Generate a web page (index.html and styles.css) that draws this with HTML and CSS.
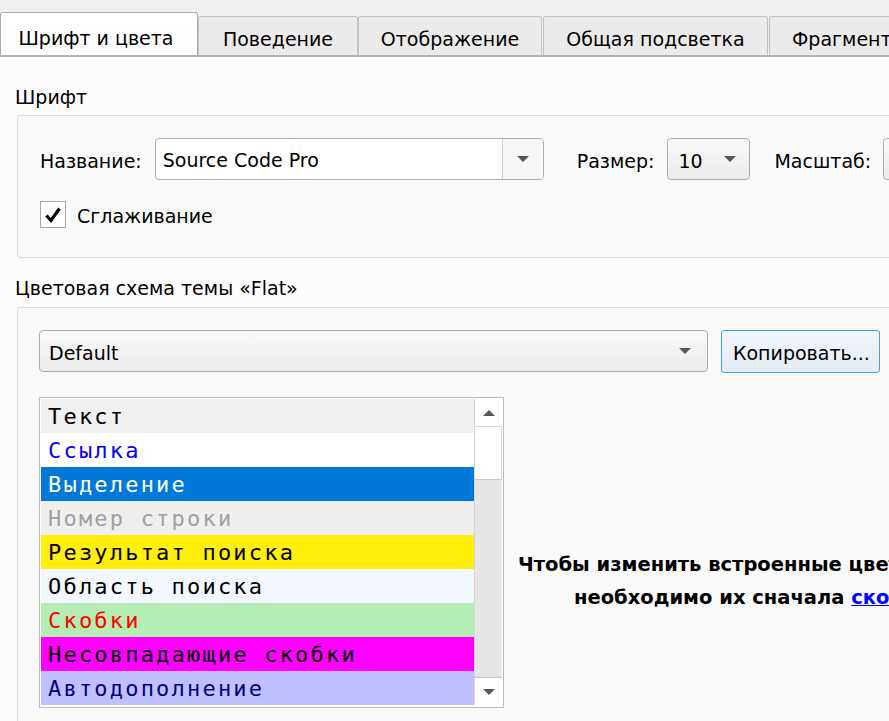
FILE: index.html
```html
<!DOCTYPE html>
<html lang="ru">
<head>
<meta charset="utf-8">
<title>Шрифт и цвета</title>
<link rel="stylesheet" href="styles.css">
</head>
<body>
<div class="tabbar">
  <div class="tab tab-active t1">Шрифт и цвета</div>
  <div class="tab t2">Поведение</div>
  <div class="tab t3">Отображение</div>
  <div class="tab t4">Общая подсветка</div>
  <div class="tab t5">Фрагмент</div>
</div>
<div class="panel">
  <div class="group-title">Шрифт</div>
  <div class="group group-font">
    <div class="font-row">
      <span class="label">Название:</span>
      <div class="combo combo-edit combo-name">
        <span class="combo-field">Source Code Pro</span>
        <span class="combo-btn"><span class="arrow"></span></span>
      </div>
      <span class="label label-size">Размер:</span>
      <div class="combo combo-plain combo-size">
        <span class="combo-text">10</span>
        <span class="arrow"></span>
      </div>
      <span class="label label-scale">Масштаб:</span>
      <div class="combo combo-plain combo-scale"></div>
    </div>
    <div class="check-row">
      <span class="checkbox">
        <svg width="18" height="18" viewBox="0 0 18 18"><path d="M2.5 9.5 L7 14.5 L15.5 2.5" fill="none" stroke="#000" stroke-width="3.2"/></svg>
      </span>
      <span class="label">Сглаживание</span>
    </div>
  </div>
  <div class="group-title group-title-2">Цветовая схема темы «Flat»</div>
  <div class="group group-scheme">
    <div class="scheme-row">
      <div class="combo combo-plain combo-scheme">
        <span class="combo-text">Default</span>
        <span class="arrow"></span>
      </div>
      <button class="btn-copy">Копировать...</button>
    </div>
    <div class="scheme-body">
      <div class="list">
        <div class="list-items">
          <div class="item it-text">Текст</div>
          <div class="item it-link">Ссылка</div>
          <div class="item it-sel">Выделение</div>
          <div class="item it-line">Номер строки</div>
          <div class="item it-search">Результат поиска</div>
          <div class="item it-scope">Область поиска</div>
          <div class="item it-paren">Скобки</div>
          <div class="item it-mismatch">Несовпадающие скобки</div>
          <div class="item it-complete">Автодополнение</div>
        </div>
        <div class="scrollbar">
          <div class="sb-btn sb-up"><span class="arrow arrow-up"></span></div>
          <div class="sb-thumb"></div>
          <div class="sb-track"></div>
          <div class="sb-btn sb-down"><span class="arrow"></span></div>
        </div>
      </div>
      <div class="info">
        <div class="info-line l1">Чтобы изменить встроенные цвета схемы,</div>
        <div class="info-line l2">необходимо их сначала <a href="#" class="info-link">скопировать</a>.</div>
      </div>
    </div>
  </div>
</div>
</body>
</html>
```
FILE: styles.css
```css
html, body {
  margin: 0;
  padding: 0;
}
body {
  width: 889px;
  height: 721px;
  overflow: hidden;
  background: #f0f0f0;
  font-family: "DejaVu Sans", sans-serif;
  font-size: 19px;
  color: #000;
}

/* tabs */
.tabbar {
  display: flex;
  align-items: flex-end;
  height: 55px;
  border-bottom: 2px solid #b4b4b4;
  white-space: nowrap;
  overflow: hidden;
}
.tab {
  box-sizing: border-box;
  flex: none;
  height: 39px;
  border: 1px solid #c2c2c2;
  border-bottom: none;
  border-radius: 3px 3px 0 0;
  background: #ebebeb;
  text-align: center;
  line-height: 45px;
  overflow: hidden;
}
.tab-active {
  height: 45px;
  margin-bottom: -2px;
  border-color: #acacac;
  background: linear-gradient(#ffffff, #fcfcfc);
  line-height: 50px;
  padding-right: 6px;
  position: relative;
}
.t1 { width: 198px; }
.t2 { width: 160px; }
.t3 { width: 184px; margin-right: 1px; }
.t4 { width: 225px; margin-right: 1px; }
.t5 { width: 200px; text-align: left; padding-left: 22px; }

/* panel */
.panel {
  background: #fcfcfc;
  height: 664px;
  padding-top: 28px;
  box-sizing: border-box;
}
.group-title {
  margin-left: 15px;
  line-height: 24px;
  height: 24px;
  margin-bottom: 6px;
}
.group-title-2 {
  margin-top: 18px;
  margin-bottom: 7px;
}
.group {
  margin-left: 17px;
  border: 1px solid #dcdcdc;
  border-right: none;
  border-radius: 3px 0 0 3px;
  background: #f9f9f9;
}
.group-font {
  padding: 22px 0 0 22px;
  height: 119px;
}
.font-row {
  display: flex;
  align-items: center;
  height: 42px;
  white-space: nowrap;
}
.label {
  line-height: 24px;
  padding-top: 3px;
}
.combo {
  box-sizing: border-box;
  height: 42px;
  border: 1px solid #adadad;
  border-radius: 4px;
  display: flex;
  align-items: center;
  flex: none;
}
.combo-name {
  width: 389px;
  margin-left: 13px;
  background: #fff;
}
.combo-field {
  flex: 1;
  padding-left: 7px;
  padding-top: 3px;
  box-sizing: border-box;
  height: 40px;
  line-height: 37px;
  border-right: 1px solid #cfcfcf;
}
.combo-btn {
  width: 40px;
  height: 40px;
  display: flex;
  align-items: center;
  justify-content: center;
  background: #f7f7f7;
  border-radius: 0 3px 3px 0;
}
.arrow {
  width: 0;
  height: 0;
  border-left: 6px solid transparent;
  border-right: 6px solid transparent;
  border-top: 6px solid #575757;
}
.arrow-up {
  border-top: none;
  border-bottom: 6px solid #575757;
}
.combo-plain {
  background: linear-gradient(#f9f9f9, #ececec);
  justify-content: space-between;
  padding: 0 13px 0 10px;
}
.combo-text {
  padding-top: 3px;
}
.label-size { margin-left: 33px; }
.combo-size {
  width: 83px;
  margin-left: 13px;
}
.label-scale { margin-left: 24px; }
.combo-scale {
  width: 60px;
  margin-left: 12px;
}
.check-row {
  display: flex;
  align-items: center;
  margin-top: 21px;
  height: 27px;
}
.check-row .label {
  padding-top: 2px;
}
.checkbox {
  box-sizing: border-box;
  width: 26px;
  height: 27px;
  border: 1px solid #a8a8a8;
  background: #fff;
  display: flex;
  align-items: center;
  justify-content: center;
  margin-right: 11px;
}

/* scheme */
.group-scheme {
  height: 420px;
  padding: 22px 0 0 21px;
}
.scheme-row {
  display: flex;
  align-items: center;
  height: 42px;
}
.combo-scheme {
  width: 669px;
  padding: 0 16px 0 9px;
}
.btn-copy {
  box-sizing: border-box;
  margin-left: 13px;
  width: 159px;
  height: 43px;
  border: 1px solid #3ea3f2;
  border-radius: 3px;
  background: linear-gradient(#f1f6fb, #e4ecf4);
  font-family: "DejaVu Sans", sans-serif;
  font-size: 19px;
  color: #000;
  text-align: left;
  padding: 3px 0 0 11px;
  white-space: nowrap;
}
.scheme-body {
  display: flex;
  margin-top: 25px;
}
.list {
  box-sizing: border-box;
  width: 465px;
  height: 311px;
  border: 1px solid #bdbdbd;
  padding: 1px;
  display: flex;
  background: #fff;
  flex: none;
}
.list-items {
  width: 434px;
}
.item {
  height: 34px;
  line-height: 35px;
  padding-left: 7px;
  font-family: "DejaVu Sans Mono", monospace;
  font-size: 22px;
  letter-spacing: 2.2px;
  white-space: pre;
}
.it-text { background: #f0f0f0; color: #000; }
.it-link { background: #ffffff; color: #0000ff; }
.it-sel { background: #0078d7; color: #ffffff; }
.it-line { background: #efefef; color: #a0a0a0; }
.it-search { background: #ffef0b; color: #000; }
.it-scope { background: #f3f7ff; color: #000; }
.it-paren { background: #b4eeb4; color: #ff0000; }
.it-mismatch { background: #ff00ff; color: #000; }
.it-complete { background: #c0c0ff; color: #000080; }

.scrollbar {
  width: 27px;
  border-left: 1px solid #d6d6d6;
  display: flex;
  flex-direction: column;
  background: #fff;
}
.sb-btn {
  height: 27px;
  display: flex;
  align-items: center;
  justify-content: center;
  flex: none;
}
.sb-up { border-bottom: 1px solid #d9d9d9; }
.sb-down { border-top: 1px solid #c8c8c8; height: 28px; }
.sb-thumb {
  height: 52px;
  border-right: 1px solid #d9d9d9;
  border-bottom: 1px solid #c8c8c8;
  flex: none;
}
.sb-track {
  flex: 1;
  background: #e6e6e6;
  border-right: 1px solid #f0f0f0;
}

.info {
  margin-left: 14px;
  margin-top: 151px;
  font-weight: bold;
  font-size: 19.5px;
  white-space: nowrap;
}
.info-line {
  line-height: 33px;
}
.l2 {
  padding-left: 56px;
}
.info-link {
  color: #0000ff;
  text-decoration: underline;
}
```
